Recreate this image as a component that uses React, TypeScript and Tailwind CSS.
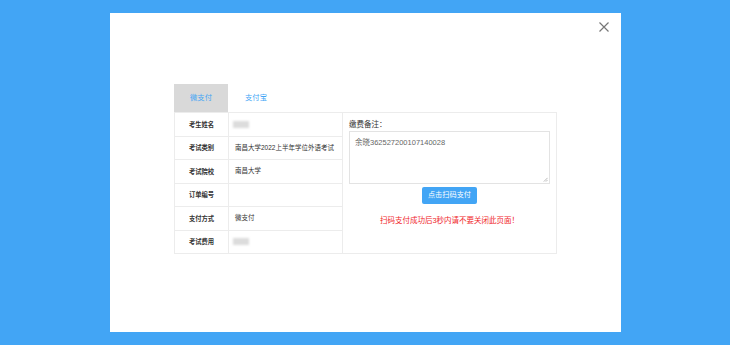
import React from "react";

const ROWS = [
  { label: "考生姓名", value: null },
  { label: "考试类别", value: "南昌大学2022上半年学位外语考试" },
  { label: "考试院校", value: "南昌大学" },
  { label: "订单编号", value: "" },
  { label: "支付方式", value: "微支付" },
  { label: "考试费用", value: null },
];

const font = { fontFamily: '"Liberation Sans", "Noto Sans CJK SC", sans-serif' };

export default function App() {
  return (
    <div className="w-[730px] h-[345px] bg-[#42a5f5] pt-[13px] pl-[110px]" style={font}>
      <div className="relative w-[511px] h-[319px] bg-white pt-[71px] flex flex-col items-center">
        {/* close */}
        <button className="absolute right-[12px] top-[9px] w-[10px] h-[10px]">
          <svg viewBox="0 0 10 10" className="w-[10px] h-[10px]">
            <path d="M0.5 0.5 L9.5 9.5 M9.5 0.5 L0.5 9.5" stroke="#777" strokeWidth="1.2" />
          </svg>
        </button>

        <div className="w-[383px]">
          {/* tabs */}
          <div className="flex h-[28px]">
            <div className="w-[54px] bg-[#d9d9d9] flex items-center justify-center text-[7.3px] text-[#42a5f5]">
              微支付
            </div>
            <div className="w-[56px] flex items-center justify-center text-[7.3px] text-[#42a5f5]">
              支付宝
            </div>
          </div>

          <div className="flex border border-[#ececec] h-[142px]">
            {/* left table */}
            <div className="w-[168px] border-r border-[#ececec] flex flex-col">
              {ROWS.map((r, i) => (
                <div
                  key={r.label}
                  className={`flex flex-1 ${i < ROWS.length - 1 ? "border-b border-[#ececec]" : ""}`}
                >
                  <div className="w-[54px] border-r border-[#ececec] flex items-center justify-center text-[6.3px] font-bold text-[#333]">
                    {r.label}
                  </div>
                  <div className="flex-1 flex items-center pl-[6px] text-[6.5px] text-[#333]">
                    {r.value === null ? (
                      <div className="-ml-[2px] w-[16px] h-[7px] bg-[#dcdcdc] blur-[1px]" />
                    ) : (
                      r.value
                    )}
                  </div>
                </div>
              ))}
            </div>

            {/* right panel */}
            <div className="flex-1 px-[6px] pt-[7px] flex flex-col">
              <div className="text-[7.5px] text-[#333] leading-[10px]">缴费备注：</div>
              <div className="relative mt-[1px] h-[53px] border border-[#e3e3e3] px-[5px] pt-[5px] text-[7.5px] text-[#666]">
                余晓362527200107140028
                <svg viewBox="0 0 6 6" className="absolute right-[1px] bottom-[1px] w-[5px] h-[5px]">
                  <path d="M5.5 1 L1 5.5 M5.5 3.5 L3.5 5.5" stroke="#999" strokeWidth="0.8" />
                </svg>
              </div>
              <div className="flex justify-center mt-[3px]">
                <button className="w-[55px] h-[17px] rounded-[2px] bg-[#42a5f5] text-white text-[7.2px]">
                  点击扫码支付
                </button>
              </div>
              <div className="mt-[11px] text-center text-[7.5px] text-[#f0262a]">
                扫码支付成功后3秒内请不要关闭此页面！
              </div>
            </div>
          </div>
        </div>
      </div>
    </div>
  );
}
